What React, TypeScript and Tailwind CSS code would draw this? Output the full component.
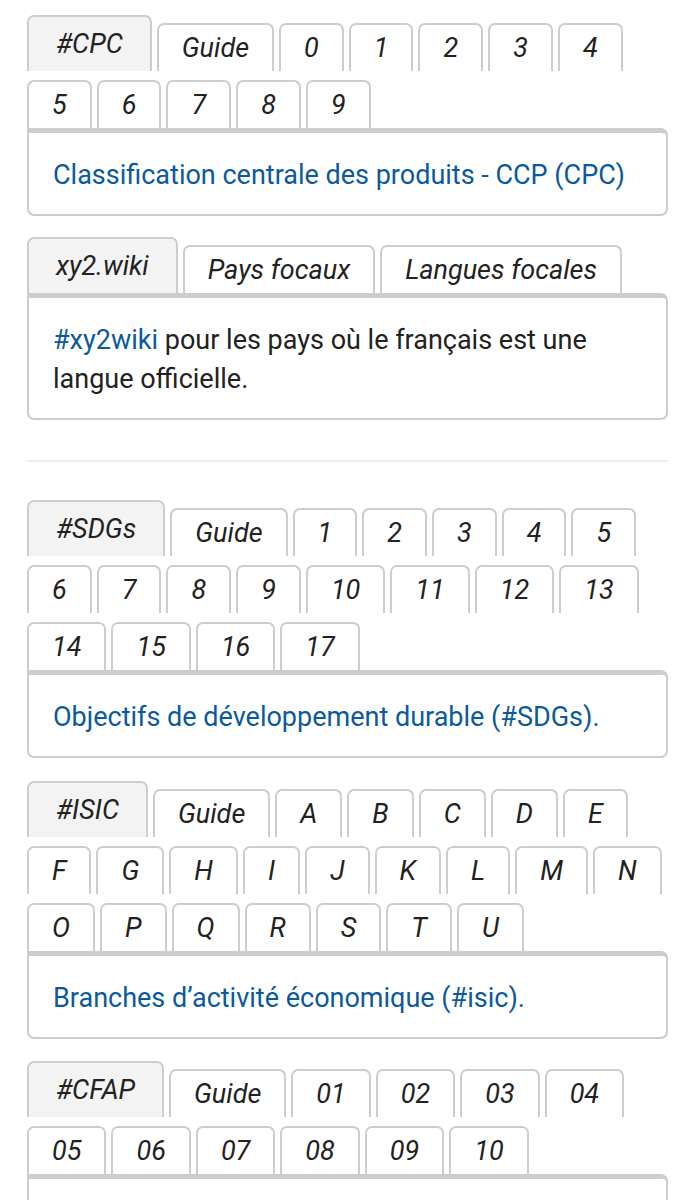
import React from "react";

type TabberProps = {
  tabs: string[];
  children: React.ReactNode;
};

function Tabber({ tabs, children }: TabberProps) {
  return (
    <div>
      <div className="flex flex-wrap items-end gap-x-[5px] gap-y-[9px]">
        {tabs.map((t, i) =>
          i === 0 ? (
            <div
              key={t}
              className="flex h-[56px] items-center justify-center rounded-t-[7px] border-2 border-b-0 border-[#cdcdcd] bg-[#f3f3f3] px-[27px] text-[27px] italic text-[#222]"
            >
              {t}
            </div>
          ) : (
            <div
              key={t}
              className="flex h-[48px] items-center justify-center rounded-t-[7px] border-2 border-b-0 border-[#cdcdcd] bg-white px-[23px] text-[27px] italic text-[#222]"
            >
              {t}
            </div>
          )
        )}
      </div>
      <div className="rounded-b-[7px] rounded-tr-[7px] border-2 border-t-[5px] border-[#cdcdcd] bg-white px-6 pb-[19px] pt-[23px] text-[27px] leading-[39px] text-[#222]">
        {children}
      </div>
    </div>
  );
}

const link = "text-[#0b5a9c]";

export default function App() {
  const digits = ["0", "1", "2", "3", "4", "5", "6", "7", "8", "9"];
  const sdgs = Array.from({ length: 17 }, (_, i) => String(i + 1));
  const isic = "ABCDEFGHIJKLMNOPQRSTU".split("");
  const cfap = Array.from({ length: 10 }, (_, i) => String(i + 1).padStart(2, "0"));

  return (
    <div
      className="min-h-[1200px] bg-white pl-[27px] pr-[14px] pt-[15px]"
      style={{ fontFamily: "Roboto, 'Noto Sans', sans-serif" }}
    >
      <Tabber tabs={["#CPC", "Guide", ...digits]}>
        <span className={link}>Classification centrale des produits - CCP (CPC)</span>
      </Tabber>

      <div className="mt-[21px]">
        <Tabber tabs={["xy2.wiki", "Pays focaux", "Langues focales"]}>
          <span className={link}>#xy2wiki</span> pour les pays où le français est une langue officielle.
        </Tabber>
      </div>

      <div className="mt-[40px] h-[2px] bg-[#eeeeee]" />

      <div className="mt-[38px]">
        <Tabber tabs={["#SDGs", "Guide", ...sdgs]}>
          <span className={link}>Objectifs de développement durable (#SDGs).</span>
        </Tabber>
      </div>

      <div className="mt-[23px]">
        <Tabber tabs={["#ISIC", "Guide", ...isic]}>
          <span className={link}>Branches d’activité économique (#isic).</span>
        </Tabber>
      </div>

      <div className="mt-[22px]">
        <Tabber tabs={["#CFAP", "Guide", ...cfap]}>
          <span className={link}>Classification des fonctions des administrations publiques (#CFAP).</span>
        </Tabber>
      </div>
    </div>
  );
}
